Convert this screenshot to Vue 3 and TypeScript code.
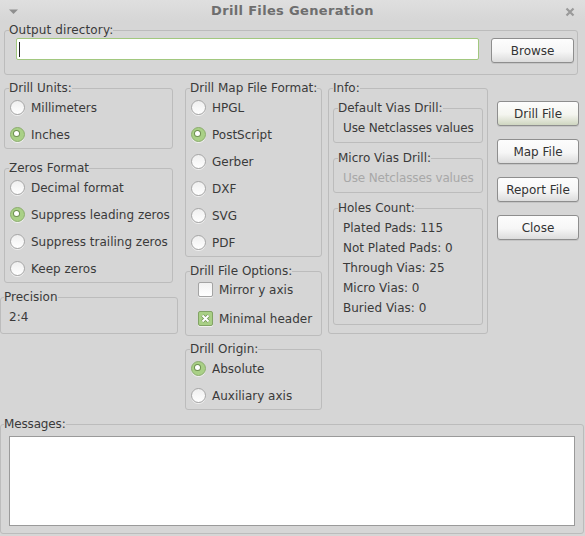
<script setup lang="ts">
const units = [{ l: 'Millimeters' }, { l: 'Inches', on: true }]
const zeros = [{ l: 'Decimal format' }, { l: 'Suppress leading zeros', on: true }, { l: 'Suppress trailing zeros' }, { l: 'Keep zeros' }]
const formats = [{ l: 'HPGL' }, { l: 'PostScript', on: true }, { l: 'Gerber' }, { l: 'DXF' }, { l: 'SVG' }, { l: 'PDF' }]
const origin = [{ l: 'Absolute', on: true }, { l: 'Auxiliary axis' }]
const holes = ['Plated Pads: 115', 'Not Plated Pads: 0', 'Through Vias: 25', 'Micro Vias: 0', 'Buried Vias: 0']
const actions = ['Drill File', 'Map File', 'Report File', 'Close']
</script>

<template>
  <div class="win">
    <header class="title">
      <svg class="menu" width="12" height="8" viewBox="0 0 12 8"><path d="M1 1.5h9L5.5 6z" fill="#8f8f8f" /></svg>
      <span>Drill Files Generation</span>
      <svg class="close" width="10" height="10" viewBox="0 0 10 10"><path d="M1.5 1.5l7 7M8.5 1.5l-7 7" stroke="#9a9a9a" stroke-width="2.2" /></svg>
    </header>

    <fieldset class="group top">
      <legend>Output directory:</legend>
      <div class="outrow">
        <div class="input"><i class="caret"></i></div>
        <button class="btn browse">Browse</button>
      </div>
    </fieldset>

    <main class="cols">
      <section class="col col1">
        <fieldset class="group inset">
          <legend>Drill Units:</legend>
          <label v-for="r in units" :key="r.l" class="row"><i class="radio" :class="{ on: r.on }"></i>{{ r.l }}</label>
        </fieldset>
        <fieldset class="group inset zeros">
          <legend>Zeros Format</legend>
          <label v-for="r in zeros" :key="r.l" class="row"><i class="radio" :class="{ on: r.on }"></i>{{ r.l }}</label>
        </fieldset>
        <fieldset class="group precision">
          <legend>Precision</legend>
          <div class="value">2:4</div>
        </fieldset>
      </section>

      <section class="col col2">
        <fieldset class="group">
          <legend>Drill Map File Format:</legend>
          <label v-for="r in formats" :key="r.l" class="row"><i class="radio" :class="{ on: r.on }"></i>{{ r.l }}</label>
        </fieldset>
        <fieldset class="group options">
          <legend>Drill File Options:</legend>
          <label class="row chk"><i class="check"></i>Mirror y axis</label>
          <label class="row chk"><i class="check on"><svg width="9" height="9" viewBox="0 0 9 9"><path d="M1.5 1.5l6 6M7.5 1.5l-6 6" stroke="#6f8f52" stroke-width="3.4" /><path d="M1.5 1.5l6 6M7.5 1.5l-6 6" stroke="#fff" stroke-width="2" /></svg></i>Minimal header</label>
        </fieldset>
        <fieldset class="group origin">
          <legend>Drill Origin:</legend>
          <label v-for="r in origin" :key="r.l" class="row"><i class="radio" :class="{ on: r.on }"></i>{{ r.l }}</label>
        </fieldset>
      </section>

      <fieldset class="group info">
        <legend>Info:</legend>
        <fieldset class="group sub">
          <legend>Default Vias Drill:</legend>
          <div class="line single">Use Netclasses values</div>
        </fieldset>
        <fieldset class="group sub micro">
          <legend>Micro Vias Drill:</legend>
          <div class="line single disabled">Use Netclasses values</div>
        </fieldset>
        <fieldset class="group sub holes">
          <legend>Holes Count:</legend>
          <div v-for="h in holes" :key="h" class="line">{{ h }}</div>
        </fieldset>
      </fieldset>

      <nav class="actions">
        <button v-for="(a, i) in actions" :key="a" class="btn" :class="{ def: i === 0 }">{{ a }}</button>
      </nav>
    </main>

    <fieldset class="group messages">
      <legend>Messages:</legend>
      <div class="log"></div>
    </fieldset>
  </div>
</template>

<style>
html, body { margin: 0; padding: 0; background: #d6d6d6; }
</style>

<style scoped>
.win {
  width: 585px;
  height: 536px;
  display: flex;
  flex-direction: column;
  background: #d6d6d6;
  font: 12px/14px "DejaVu Sans", sans-serif;
  color: #3a3a3a;
  overflow: hidden;
}
.title {
  height: 20px;
  padding-top: 1px;
  flex: none;
  position: relative;
  display: flex;
  align-items: center;
  justify-content: center;
  background: linear-gradient(#dfdfdf, #d6d6d6);
  font-weight: 700;
  font-size: 13px;
  letter-spacing: 0.33px;
  color: #6e6e6e;
}
.menu { position: absolute; left: 8px; top: 8px; }
.close { position: absolute; left: 565px; top: 7px; }

.group {
  margin: 0;
  padding: 0;
  min-width: 0;
  border: 1px solid #bcbcbc;
  border-radius: 3px;
}
legend {
  padding: 0;
  margin-left: 4px;
  margin-bottom: -1px;
  line-height: 14px;
  color: #3a3a3a;
  white-space: nowrap;
}
.top { margin: 2px 7px 0 4px; height: 50px; }
.top legend { letter-spacing: 0.12px; }
.outrow { display: flex; align-items: flex-start; padding: 2px 3px 0 11px; }
.input {
  width: 461px;
  height: 20px;
  border: 1px solid #a2c87f;
  border-radius: 2px;
  background: #fff;
  display: flex;
  align-items: center;
  padding-left: 2px;
  box-sizing: content-box;
}
.caret { width: 1px; height: 15px; background: #222; }
.btn {
  display: block;
  box-sizing: border-box;
  font: inherit;
  color: #333;
  padding: 0;
  border: 1px solid #8e8e8e;
  border-radius: 3px;
  background: linear-gradient(#fdfdfd 0%, #f6f6f6 55%, #dcdcdc 100%);
  box-shadow: 0 1px 0 #c4c4c4;
}
.browse { width: 83px; height: 25px; margin-left: 12px; }

.cols {
  display: flex;
  align-items: flex-start;
  margin-top: 6px;
}
.col { display: flex; flex-direction: column; }
.col1 { width: 178px; }
.inset { margin: 0 5px 0 4px; }
.zeros { margin-top: 12px; }
.precision { margin-top: 7px; height: 42px; }
.precision legend { margin-left: 3px; }
.value { padding: 6px 0 0 8px; line-height: 16px; }

.col2 { width: 137px; margin-left: 7px; }
.options { margin-top: 7px; height: 70px; }
.options legend { margin-bottom: -3px; }
.origin { margin-top: 6px; }

.row {
  display: flex;
  align-items: center;
  height: 27px;
  padding-left: 5px;
  white-space: nowrap;
}
.radio {
  position: relative;
  flex: none;
  box-sizing: border-box;
  width: 15px;
  height: 15px;
  margin-right: 6px;
  border-radius: 50%;
  border: 1px solid #a6a6a6;
  background: linear-gradient(#efefef, #ffffff);
  box-shadow: 0 1px 0 #f0f0f0;
}
.radio.on {
  border-color: #8bab6e;
  background: #a9d086;
}
.radio.on::after {
  content: "";
  position: absolute;
  box-sizing: content-box;
  width: 5px;
  height: 5px;
  left: 3px;
  top: 3px;
  border-radius: 50%;
  background: #fff;
  box-shadow: 0 0 0 1px #6f8f52;
}
.chk { padding-left: 12px; height: 29px; }
.check {
  flex: none;
  box-sizing: border-box;
  width: 15px;
  height: 15px;
  margin-right: 6px;
  border: 1px solid #a4a4a4;
  border-radius: 2px;
  background: linear-gradient(#f2f2f2, #fff);
  box-shadow: 0 1px 0 #f0f0f0;
  display: flex;
  align-items: center;
  justify-content: center;
}
.check.on { background: #a9d086; border-color: #82a365; }

.info { width: 160px; margin-left: 6px; height: 253px; box-sizing: border-box; }
.info > legend { margin-bottom: 6px; }
.sub { margin: 0 4px; }
.sub legend { margin-left: 4px; margin-bottom: 3px; }
.micro { margin-top: 8px; }
.holes { margin-top: 8px; padding-bottom: 6px; }
.line { height: 20px; line-height: 20px; padding-left: 9px; white-space: nowrap; }
.single { margin-bottom: 4px; letter-spacing: -0.14px; }
.disabled { color: #a8a8a8; }

.actions {
  display: flex;
  flex-direction: column;
  gap: 13px;
  margin: 20px 0 0 9px;
}
.actions .btn { width: 82px; height: 25px; }
.def { background: linear-gradient(#fdfdfd 0%, #f4f5ef 55%, #cfd6c0 100%); }

.messages {
  margin: auto 1px 2px 0;
  height: 117px;
  box-sizing: border-box;
}
.messages legend { margin-left: 3px; letter-spacing: -0.15px; }
.log {
  box-sizing: border-box;
  height: 90px;
  margin: 6px 8px 0 8px;
  background: #fff;
  border: 1px solid #9a9a9a;
}
</style>
